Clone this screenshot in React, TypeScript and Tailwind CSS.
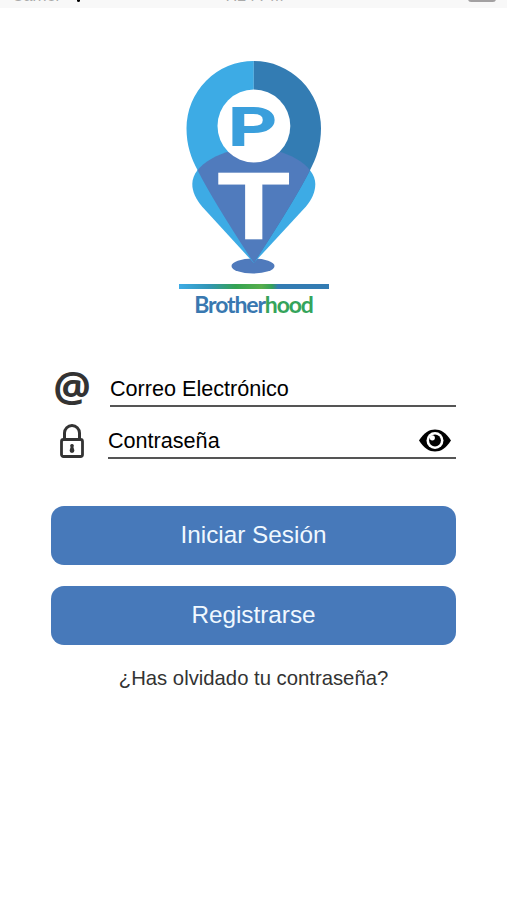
import { useState } from "react";

function StatusBar() {
  return (
    <div className="relative h-2 shrink-0 overflow-hidden bg-[#f8f8f8] text-[16px] leading-5 text-[#aaa]">
      <span className="absolute left-3 -top-3.5">Carrier</span>
      <span className="absolute left-[77px] top-0 h-0.5 w-[3px] rounded-b bg-black"></span>
      <span className="absolute left-[224px] -top-3.5">7:24 PM</span>
      <span className="absolute right-[11px] -top-2 h-2.5 w-[28px] rounded-[3px] bg-[#a3a1a2]"></span>
    </div>
  );
}

function Logo() {
  return (
    <svg
      className="block h-[216px] w-[152px]"
      viewBox="178 60 152 216"
      role="img"
      aria-label="PT Brotherhood"
    >
      <defs>
        <clipPath id="lowerPin">
          <path d="M192.3 184C192.3 165 222 148 253.8 148S315.3 165 315.3 184C315.3 192 312 199 306 206.5L253.8 263L202 206.5C196 199 192.3 192 192.3 184Z" />
        </clipPath>
      </defs>
      <ellipse cx="253" cy="266" rx="21.5" ry="7.5" fill="#4f7abc" />
      <path
        d="M192.3 184C192.3 165 222 148 253.8 148S315.3 165 315.3 184C315.3 192 312 199 306 206.5L253.8 263L202 206.5C196 199 192.3 192 192.3 184Z"
        fill="#3dabe5"
      />
      <path
        d="M253.8 61A67.3 67.3 0 0 0 186.5 128.3C186.5 145 191 158 198 171Q212 199 253.8 263Z"
        fill="#3dabe5"
      />
      <path
        d="M253.8 61A67.3 67.3 0 0 1 321 128.3C321 145 316.5 158 309.6 171Q295.6 199 253.8 263Z"
        fill="#337cb3"
      />
      <path
        d="M253.8 61A67.3 67.3 0 0 0 186.5 128.3C186.5 145 191 158 198 171Q212 199 253.8 263Q295.6 199 309.6 171C316.5 158 321 145 321 128.3A67.3 67.3 0 0 0 253.8 61Z"
        fill="#507bbd"
        clipPath="url(#lowerPin)"
      />
      <circle cx="253.9" cy="126" r="36.4" fill="#fff" />
      <text
        className="font-['Inter'] text-[48px] font-light"
        transform="translate(228.5 143.7) scale(1.57 1)"
        fill="#3a9fdc"
        stroke="#3a9fdc"
        strokeWidth="4.2"
      >
        P
      </text>
      <text
        className="font-['Inter'] text-[83px] font-light"
        transform="translate(253.8 236) scale(1.4 1)"
        textAnchor="middle"
        fill="#fff"
        stroke="#fff"
        strokeWidth="6.5"
      >
        T
      </text>
    </svg>
  );
}

function LockIcon() {
  return (
    <svg className="h-[34px] w-6" viewBox="0 0 24 34" fill="none" stroke="#333">
      <rect x="1.5" y="15.5" width="21" height="17" rx="2" strokeWidth="2.8" />
      <path d="M4.5 15V9a7.5 7.5 0 0 1 15 0v6" strokeWidth="3" />
      <path
        d="M12 20a1.8 1.8 0 0 1 1.4 3l1 3.5a2.4 2.4 0 0 1-4.8 0l1-3.5a1.8 1.8 0 0 1 1.4-3Z"
        fill="#333"
        stroke="none"
      />
    </svg>
  );
}

function EyeIcon() {
  return (
    <svg className="h-[23px] w-[32px]" viewBox="0 0 32 23">
      <path d="M0 11.5C5 3.5 10.5.5 16 .5S27 3.5 32 11.5C27 19.5 21.5 22.5 16 22.5S5 19.5 0 11.5Z" />
      <circle cx="16" cy="11.5" r="8.5" fill="#fff" />
      <circle cx="16" cy="11.5" r="5.9" />
      <circle cx="13.3" cy="8.8" r="2.6" fill="#fff" />
    </svg>
  );
}

export default function App() {
  const [showPassword, setShowPassword] = useState(false);

  return (
    <main className="flex h-[900px] w-[507px] flex-col overflow-hidden bg-white font-['Liberation_Sans',sans-serif]">
      <StatusBar />
      <header className="mt-[52px] flex flex-col items-center">
        <Logo />
        <div className="mt-2 h-[5px] w-[150px] bg-[linear-gradient(90deg,#3dabe5_0%,#3296b5_20%,#34a352_38%,#57ae4c_55%,#34a05a_62%,#337cb3_66%)]"></div>
        <h1 className="mt-[3px] text-[23px] leading-6 font-bold tracking-[-1.15px] text-[#3978b0] font-['Lato',sans-serif]">
          Brother<span className="text-[#35a45b]">hood</span>
        </h1>
      </header>
      <form
        className="mx-[51px] mt-[55px] flex flex-col"
        onSubmit={(e) => e.preventDefault()}
      >
        <div className="flex h-[36px] items-center">
          <span className="-mt-1.5 w-[42px] text-center text-[42px] leading-9 font-bold text-[#333] font-['Open_Sans',sans-serif]">
            @
          </span>
          <input
            className="ml-[17px] h-[36px] min-w-0 flex-1 border-b-2 border-[#555] pt-0.5 text-[21.6px] text-black outline-none placeholder:text-black placeholder:opacity-100"
            type="email"
            placeholder="Correo Electrónico"
          />
        </div>
        <div className="mt-4 flex h-9 items-center">
          <span className="flex w-[42px] justify-center">
            <LockIcon />
          </span>
          <div className="ml-[15px] flex h-9 flex-1 items-center border-b-2 border-[#555]">
            <input
              className="h-full min-w-0 flex-1 pt-0.5 text-[21.6px] text-black outline-none placeholder:text-black placeholder:opacity-100"
              type={showPassword ? "text" : "password"}
              placeholder="Contraseña"
            />
            <button
              className="mt-px mr-[5px]"
              type="button"
              aria-label="Mostrar contraseña"
              onClick={() => setShowPassword(!showPassword)}
            >
              <EyeIcon />
            </button>
          </div>
        </div>
        <button className="mt-[47px] h-[59px] rounded-[13px] bg-[#4779ba] text-[24.3px] text-[#f0f8ff]">
          Iniciar Sesión
        </button>
        <button
          className="mt-[21px] h-[59px] rounded-[13px] bg-[#4779ba] text-[24.3px] text-[#f0f8ff]"
          type="button"
        >
          Registrarse
        </button>
        <a className="mt-[19px] text-center text-[20.3px] leading-7 text-[#333]" href="#">
          ¿Has olvidado tu contraseña?
        </a>
      </form>
    </main>
  );
}
